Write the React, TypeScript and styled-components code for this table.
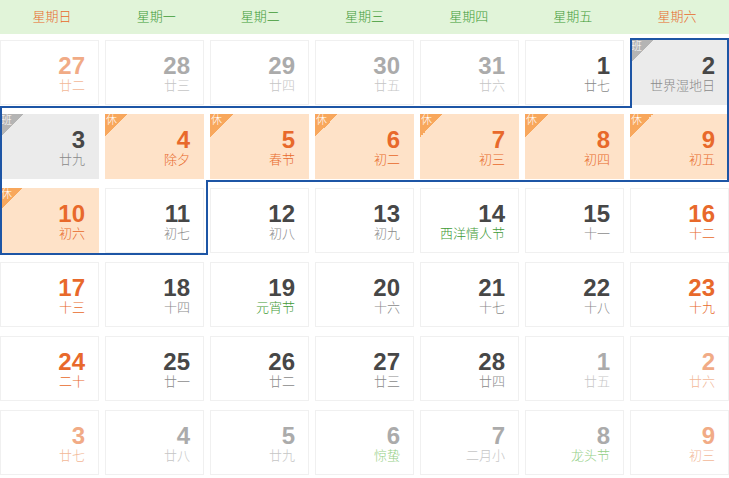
import styled, { createGlobalStyle } from "styled-components";

const GlobalStyle = createGlobalStyle`
  body {
    margin: 0;
    background: #fff;
    font-family: "Liberation Sans", Arial, "Noto Sans CJK SC", sans-serif;
  }
`;

type Tone = "normal" | "weekend" | "faded" | "fadedWeekend";
type Kind = "plain" | "rest" | "work";

interface Day {
  n: number;
  sub: string;
  tone: Tone;
  kind?: Kind;
  fest?: boolean;
}

const WEEK = ["星期日", "星期一", "星期二", "星期三", "星期四", "星期五", "星期六"];

const n = (num: number, sub: string, col: number): Day => ({
  n: num,
  sub,
  tone: col === 0 || col === 6 ? "weekend" : "normal",
});

const rows: Day[][] = [
  [
    { n: 27, sub: "廿二", tone: "fadedWeekend" },
    { n: 28, sub: "廿三", tone: "faded" },
    { n: 29, sub: "廿四", tone: "faded" },
    { n: 30, sub: "廿五", tone: "faded" },
    { n: 31, sub: "廿六", tone: "faded" },
    { n: 1, sub: "廿七", tone: "normal" },
    { n: 2, sub: "世界湿地日", tone: "normal", kind: "work" },
  ],
  [
    { n: 3, sub: "廿九", tone: "normal", kind: "work" },
    { n: 4, sub: "除夕", tone: "weekend", kind: "rest" },
    { n: 5, sub: "春节", tone: "weekend", kind: "rest" },
    { n: 6, sub: "初二", tone: "weekend", kind: "rest" },
    { n: 7, sub: "初三", tone: "weekend", kind: "rest" },
    { n: 8, sub: "初四", tone: "weekend", kind: "rest" },
    { n: 9, sub: "初五", tone: "weekend", kind: "rest" },
  ],
  [
    { n: 10, sub: "初六", tone: "weekend", kind: "rest" },
    n(11, "初七", 1),
    n(12, "初八", 2),
    n(13, "初九", 3),
    { n: 14, sub: "西洋情人节", tone: "normal", fest: true },
    n(15, "十一", 5),
    n(16, "十二", 6),
  ],
  [
    n(17, "十三", 0),
    n(18, "十四", 1),
    { n: 19, sub: "元宵节", tone: "normal", fest: true },
    n(20, "十六", 3),
    n(21, "十七", 4),
    n(22, "十八", 5),
    n(23, "十九", 6),
  ],
  [
    n(24, "二十", 0),
    n(25, "廿一", 1),
    n(26, "廿二", 2),
    n(27, "廿三", 3),
    n(28, "廿四", 4),
    { n: 1, sub: "廿五", tone: "faded" },
    { n: 2, sub: "廿六", tone: "fadedWeekend" },
  ],
  [
    { n: 3, sub: "廿七", tone: "fadedWeekend" },
    { n: 4, sub: "廿八", tone: "faded" },
    { n: 5, sub: "廿九", tone: "faded" },
    { n: 6, sub: "惊蛰", tone: "faded", fest: true },
    { n: 7, sub: "二月小", tone: "faded" },
    { n: 8, sub: "龙头节", tone: "faded", fest: true },
    { n: 9, sub: "初三", tone: "fadedWeekend" },
  ],
];

const numColor: Record<Tone, string> = {
  normal: "#474747",
  weekend: "#e8692b",
  faded: "#ababab",
  fadedWeekend: "#f1ab86",
};

const subColor: Record<Tone, string> = {
  normal: "#8a8a8a",
  weekend: "#e8692b",
  faded: "#c6c6c6",
  fadedWeekend: "#f2b898",
};

const bgColor: Record<Kind, string> = {
  plain: "#fff",
  rest: "#fee2c8",
  work: "#ebebeb",
};

const Page = styled.div`
  position: relative;
  width: 729px;
  height: 478px;
  overflow: hidden;
`;

const Header = styled.div`
  display: grid;
  grid-template-columns: repeat(7, 1fr);
  height: 34px;
  background: #e1f4d9;
`;

const WeekName = styled.div<{ $weekend: boolean }>`
  display: flex;
  align-items: center;
  justify-content: center;
  padding-bottom: 3px;
  font-size: 13px;
  font-weight: 300;
  color: ${(p) => (p.$weekend ? "#e8692b" : "#3f9a36")};
`;

const Body = styled.div`
  display: grid;
  grid-template-columns: repeat(7, 1fr);
  grid-auto-rows: 65px;
  column-gap: 6px;
  row-gap: 9px;
  padding-top: 6px;
`;

const Cell = styled.div<{ $kind: Kind }>`
  position: relative;
  box-sizing: border-box;
  display: flex;
  flex-direction: column;
  align-items: flex-end;
  padding: 13px 13px 0 0;
  background: ${(p) => bgColor[p.$kind]};
  border: 1px solid ${(p) => (p.$kind === "plain" ? "#f0f0f0" : bgColor[p.$kind])};
`;

const Corner = styled.span<{ $kind: Kind }>`
  position: absolute;
  top: -1px;
  left: -1px;
  width: 23px;
  height: 23px;
  background: linear-gradient(
    135deg,
    ${(p) => (p.$kind === "rest" ? "#f8a75c" : "#b4b4b4")} 50%,
    transparent 50%
  );
  color: #fff;
  font-size: 11px;
  font-weight: 300;
  line-height: 13px;
  padding-left: 1px;
  box-sizing: border-box;
`;

const Num = styled.div<{ $tone: Tone }>`
  font-size: 24px;
  line-height: 24px;
  font-weight: bold;
  color: ${(p) => numColor[p.$tone]};
`;

const Sub = styled.div<{ $tone: Tone; $fest?: boolean }>`
  margin-top: 0;
  font-size: 13px;
  font-weight: 300;
  line-height: 16px;
  color: ${(p) =>
    p.$fest ? (p.$tone === "faded" ? "#93cf86" : "#3f9a36") : subColor[p.$tone]};
`;

const Outline = styled.svg`
  position: absolute;
  inset: 0;
  pointer-events: none;
`;

export default function App() {
  return (
    <>
      <GlobalStyle />
      <Page>
        <Header>
          {WEEK.map((w, i) => (
            <WeekName key={w} $weekend={i === 0 || i === 6}>
              {w}
            </WeekName>
          ))}
        </Header>
        <Body>
          {rows.flat().map((d, i) => {
            const kind = d.kind ?? "plain";
            return (
              <Cell key={i} $kind={kind}>
                {kind !== "plain" && (
                  <Corner $kind={kind}>{kind === "rest" ? "休" : "班"}</Corner>
                )}
                <Num $tone={d.tone}>{d.n}</Num>
                <Sub $tone={d.tone} $fest={d.fest}>
                  {d.sub}
                </Sub>
              </Cell>
            );
          })}
        </Body>
        <Outline width="729" height="478" viewBox="0 0 729 478">
          <polygon
            points="631,39 728,39 728,181 207,181 207,254 1,254 1,107 631,107"
            fill="none"
            stroke="#1d55a5"
            strokeWidth="2"
          />
        </Outline>
      </Page>
    </>
  );
}
